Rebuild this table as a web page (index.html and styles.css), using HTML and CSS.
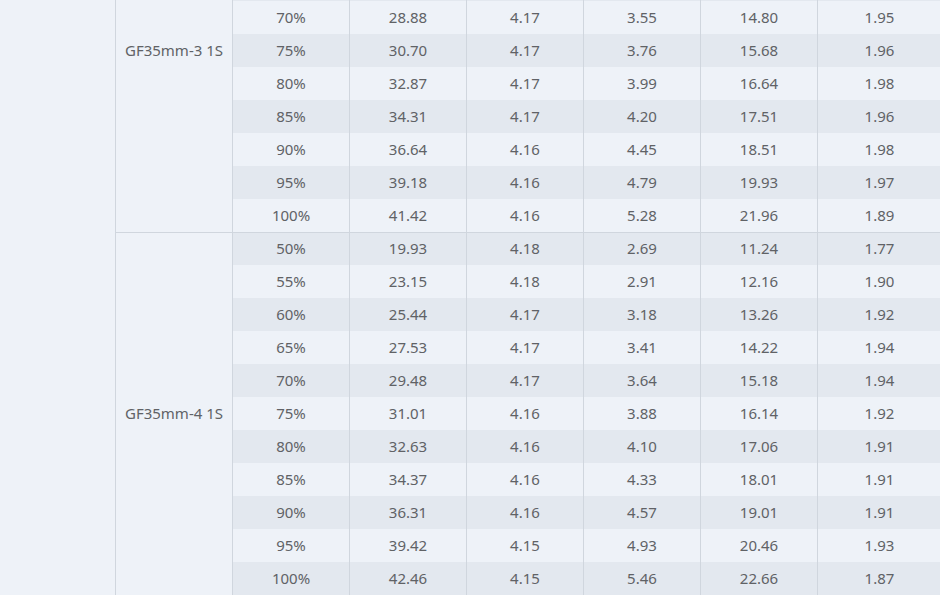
FILE: index.html
```html
<!DOCTYPE html>
<html lang="en">
<head>
<meta charset="utf-8">
<title>GF35mm data</title>
<link rel="stylesheet" href="styles.css">
</head>
<body>
<div class="viewport">
<table class="data">
<colgroup>
<col class="c-outer"><col class="c-model"><col class="c-val"><col class="c-val"><col class="c-val"><col class="c-val"><col class="c-val"><col class="c-last">
</colgroup>
<tbody>
<tr class="odd"><td class="outer" rowspan="22"></td><td class="model" rowspan="11">GF35mm-3 1S</td><td>50%</td><td>19.80</td><td>4.18</td><td>2.68</td><td>11.20</td><td>1.77</td></tr>
<tr class="even"><td>55%</td><td>22.95</td><td>4.18</td><td>2.90</td><td>12.12</td><td>1.89</td></tr>
<tr class="odd"><td>60%</td><td>25.20</td><td>4.17</td><td>3.15</td><td>13.14</td><td>1.92</td></tr>
<tr class="even"><td>65%</td><td>27.10</td><td>4.17</td><td>3.35</td><td>13.97</td><td>1.94</td></tr>
<tr class="odd"><td>70%</td><td>28.88</td><td>4.17</td><td>3.55</td><td>14.80</td><td>1.95</td></tr>
<tr class="even"><td>75%</td><td>30.70</td><td>4.17</td><td>3.76</td><td>15.68</td><td>1.96</td></tr>
<tr class="odd"><td>80%</td><td>32.87</td><td>4.17</td><td>3.99</td><td>16.64</td><td>1.98</td></tr>
<tr class="even"><td>85%</td><td>34.31</td><td>4.17</td><td>4.20</td><td>17.51</td><td>1.96</td></tr>
<tr class="odd"><td>90%</td><td>36.64</td><td>4.16</td><td>4.45</td><td>18.51</td><td>1.98</td></tr>
<tr class="even"><td>95%</td><td>39.18</td><td>4.16</td><td>4.79</td><td>19.93</td><td>1.97</td></tr>
<tr class="odd"><td>100%</td><td>41.42</td><td>4.16</td><td>5.28</td><td>21.96</td><td>1.89</td></tr>
<tr class="even group-start"><td class="model" rowspan="11">GF35mm-4 1S</td><td>50%</td><td>19.93</td><td>4.18</td><td>2.69</td><td>11.24</td><td>1.77</td></tr>
<tr class="odd"><td>55%</td><td>23.15</td><td>4.18</td><td>2.91</td><td>12.16</td><td>1.90</td></tr>
<tr class="even"><td>60%</td><td>25.44</td><td>4.17</td><td>3.18</td><td>13.26</td><td>1.92</td></tr>
<tr class="odd"><td>65%</td><td>27.53</td><td>4.17</td><td>3.41</td><td>14.22</td><td>1.94</td></tr>
<tr class="even"><td>70%</td><td>29.48</td><td>4.17</td><td>3.64</td><td>15.18</td><td>1.94</td></tr>
<tr class="odd"><td>75%</td><td>31.01</td><td>4.16</td><td>3.88</td><td>16.14</td><td>1.92</td></tr>
<tr class="even"><td>80%</td><td>32.63</td><td>4.16</td><td>4.10</td><td>17.06</td><td>1.91</td></tr>
<tr class="odd"><td>85%</td><td>34.37</td><td>4.16</td><td>4.33</td><td>18.01</td><td>1.91</td></tr>
<tr class="even"><td>90%</td><td>36.31</td><td>4.16</td><td>4.57</td><td>19.01</td><td>1.91</td></tr>
<tr class="odd"><td>95%</td><td>39.42</td><td>4.15</td><td>4.93</td><td>20.46</td><td>1.93</td></tr>
<tr class="even"><td>100%</td><td>42.46</td><td>4.15</td><td>5.46</td><td>22.66</td><td>1.87</td></tr>
</tbody>
</table>
</div>
</body>
</html>
```
FILE: styles.css
```css
html, body {
  margin: 0;
  padding: 0;
  background: #eef2f8;
}
.viewport {
  width: 940px;
  height: 595px;
  overflow: hidden;
}
.data {
  margin-top: -131px;
  width: 940px;
  table-layout: fixed;
  border-collapse: separate;
  border-spacing: 0;
  font-family: "Noto Sans", "Open Sans", sans-serif;
  font-size: 15px;
  color: #606266;
}
.c-outer { width: 116px; }
.c-model { width: 117px; }
.c-val { width: 117px; }
.c-last { width: 123px; }
.data td {
  height: 33px;
  padding: 0 0 2px;
  box-sizing: border-box;
  text-align: center;
  vertical-align: middle;
  border-right: 1px solid #d0d6de;
  line-height: 20px;
}
.data td:last-child { border-right: none; }
.data tr.odd td { background: #eef2f8; }
.data tr.even td { background: #e3e8ef; }
.data tr td.outer,
.data tr td.model { background: #eef2f8; }
.data tr.group-start td {
  border-top: 1px solid #d0d6de;
  padding-bottom: 2px;
}
```
